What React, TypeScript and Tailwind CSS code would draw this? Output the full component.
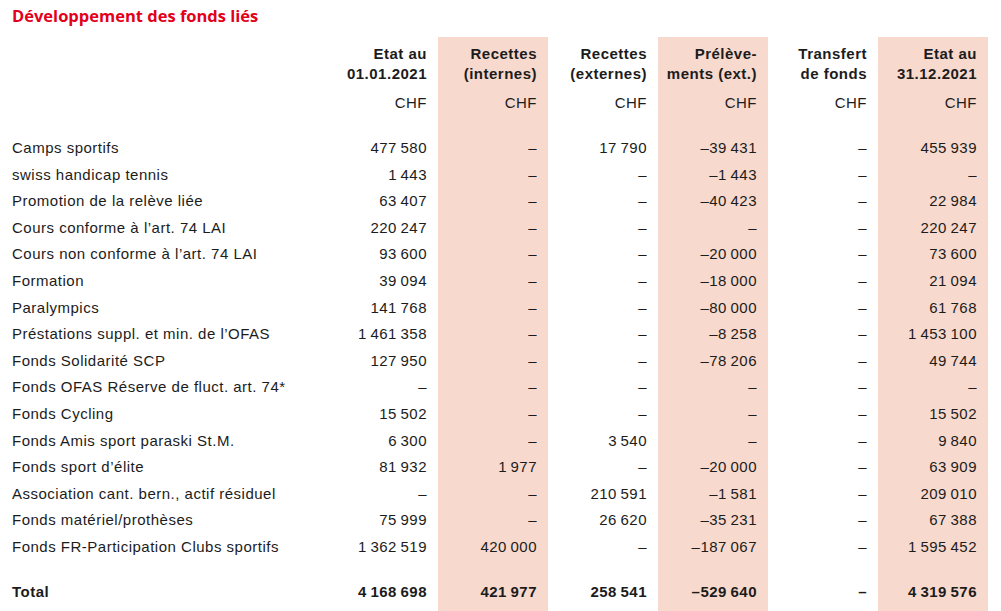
import React from 'react';

type Row = [string, string, string, string, string, string, string];

const T = '\u2009';
const D = '–';

const rows: Row[] = [
  ['Camps sportifs', `477${T}580`, D, `17${T}790`, `–39${T}431`, D, `455${T}939`],
  ['swiss handicap tennis', `1${T}443`, D, D, `–1${T}443`, D, D],
  ['Promotion de la relève liée', `63${T}407`, D, D, `–40${T}423`, D, `22${T}984`],
  ['Cours conforme à l’art. 74 LAI', `220${T}247`, D, D, D, D, `220${T}247`],
  ['Cours non conforme à l’art. 74 LAI', `93${T}600`, D, D, `–20${T}000`, D, `73${T}600`],
  ['Formation', `39${T}094`, D, D, `–18${T}000`, D, `21${T}094`],
  ['Paralympics', `141${T}768`, D, D, `–80${T}000`, D, `61${T}768`],
  ['Préstations suppl. et min. de l’OFAS', `1${T}461${T}358`, D, D, `–8${T}258`, D, `1${T}453${T}100`],
  ['Fonds Solidarité SCP', `127${T}950`, D, D, `–78${T}206`, D, `49${T}744`],
  ['Fonds OFAS Réserve de fluct. art. 74*', D, D, D, D, D, D],
  ['Fonds Cycling', `15${T}502`, D, D, D, D, `15${T}502`],
  ['Fonds Amis sport paraski St.M.', `6${T}300`, D, `3${T}540`, D, D, `9${T}840`],
  ['Fonds sport d’élite', `81${T}932`, `1${T}977`, D, `–20${T}000`, D, `63${T}909`],
  ['Association cant. bern., actif résiduel', D, D, `210${T}591`, `–1${T}581`, D, `209${T}010`],
  ['Fonds matériel/prothèses', `75${T}999`, D, `26${T}620`, `–35${T}231`, D, `67${T}388`],
  ['Fonds FR-Participation Clubs sportifs', `1${T}362${T}519`, `420${T}000`, D, `–187${T}067`, D, `1${T}595${T}452`],
];

const total: Row = ['Total', `4${T}168${T}698`, `421${T}977`, `258${T}541`, `–529${T}640`, D, `4${T}319${T}576`];

const headers: [string, string][] = [
  ['Etat au', '01.01.2021'],
  ['Recettes', '(internes)'],
  ['Recettes', '(externes)'],
  ['Prélève-', 'ments (ext.)'],
  ['Transfert', 'de fonds'],
  ['Etat au', '31.12.2021'],
];

// columns 2, 4 and 6 are tinted
const pink = (n: number) => (n % 2 === 0 ? 'bg-[#f8d9cd]' : '');

export default function App() {
  return (
    <div className="w-[1001px] h-[611px] overflow-hidden bg-white text-[#1c1c1c] font-['Liberation_Sans',Arial,sans-serif]">
      <h1 className="pl-[12px] pt-[6px] h-[37px] text-[16.5px] leading-[20px] font-bold text-[#e2001a] font-['Open_Sans',sans-serif]">
        Développement des fonds liés
      </h1>
      <div className="grid grid-cols-[328px_repeat(6,110px)] text-[15px] tracking-[0.5px]">
        {/* header */}
        <div />
        {headers.map((h, i) => (
          <div key={i} className={`pt-[7px] pr-[11px] text-right font-bold leading-[20px] ${pink(i + 1)}`}>
            <div>{h[0]}</div>
            <div>{h[1]}</div>
          </div>
        ))}
        <div />
        {headers.map((_, i) => (
          <div key={i} className={`h-[42px] pt-[9px] pr-[11px] text-right leading-[20px] ${pink(i + 1)}`}>
            CHF
          </div>
        ))}
        <div className="h-[9px]" />
        {headers.map((_, i) => (
          <div key={i} className={pink(i + 1)} />
        ))}

        {rows.map((r, ri) =>
          r.map((c, ci) => (
            <div
              key={`${ri}-${ci}`}
              className={`h-[26.6px] flex items-center whitespace-nowrap ${
                ci === 0 ? 'pl-[12px]' : `justify-end pr-[11px] ${pink(ci)}`
              }`}
            >
              {c}
            </div>
          ))
        )}

        <div className="h-[18px]" />
        {headers.map((_, i) => (
          <div key={i} className={pink(i + 1)} />
        ))}

        {total.map((c, ci) => (
          <div
            key={ci}
            className={`h-[40px] pb-[13px] flex items-center font-bold whitespace-nowrap ${
              ci === 0 ? 'pl-[12px]' : `justify-end pr-[11px] ${pink(ci)}`
            }`}
          >
            {c}
          </div>
        ))}
      </div>
    </div>
  );
}
